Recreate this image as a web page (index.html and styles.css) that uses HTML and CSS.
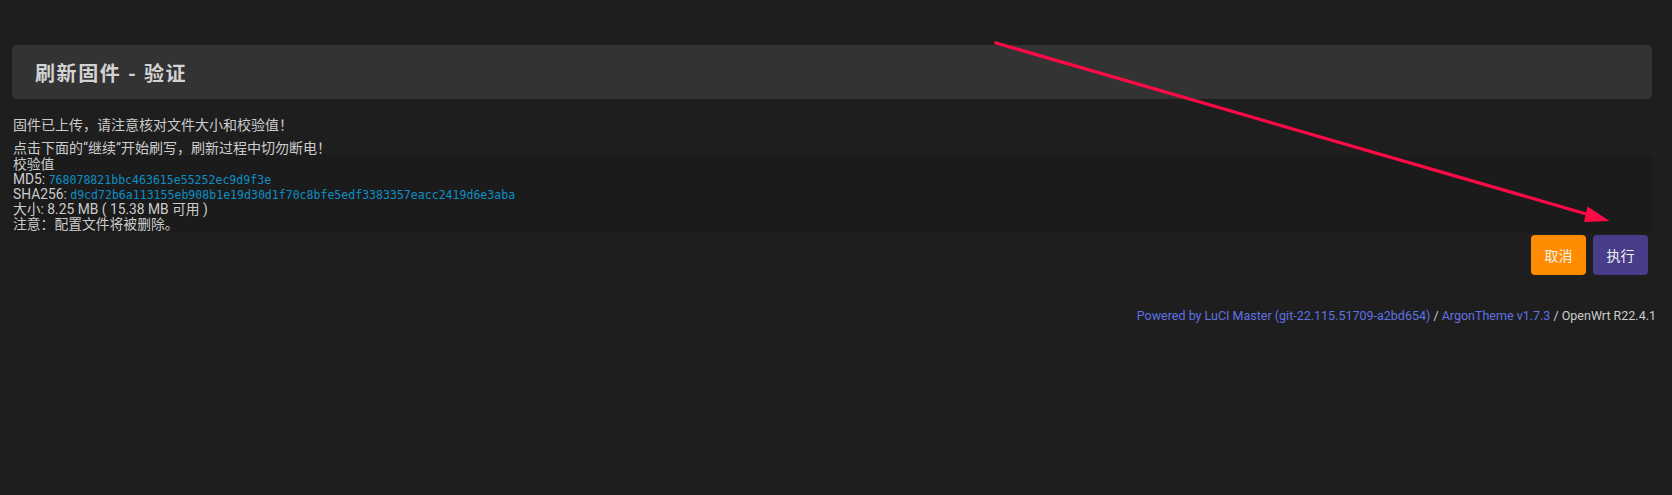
FILE: index.html
```html
<!DOCTYPE html>
<html lang="zh-CN">
<head>
<meta charset="utf-8">
<title>刷新固件 - 验证</title>
<link rel="stylesheet" href="styles.css">
</head>
<body>
<div class="main">
  <div class="page-title"><h2>刷新固件 - 验证</h2></div>
  <p class="note first">固件已上传，请注意核对文件大小和校验值！</p>
  <p class="note second">点击下面的“继续”开始刷写，刷新过程中切勿断电！</p>
  <div class="checksums">
    <div class="line">校验值</div>
    <div class="line">MD5: <code>768078821bbc463615e55252ec9d9f3e</code></div>
    <div class="line">SHA256: <code>d9cd72b6a113155eb908b1e19d30d1f70c8bfe5edf3383357eacc2419d6e3aba</code></div>
    <div class="line">大小: 8.25 MB ( 15.38 MB 可用 )</div>
    <div class="line">注意：配置文件将被删除。</div>
  </div>
  <div class="actions">
    <button class="btn btn-cancel">取消</button>
    <button class="btn btn-apply">执行</button>
  </div>
</div>
<footer class="footer">
  <a href="#">Powered by LuCI Master (git-22.115.51709-a2bd654)</a> / <a href="#">ArgonTheme v1.7.3</a> / OpenWrt R22.4.1
</footer>
<svg class="annotation" width="1672" height="495" viewBox="0 0 1672 495">
  <line x1="994.5" y1="42.5" x2="1588" y2="214.5" stroke="#ff0a46" stroke-width="3.2"/>
  <polygon points="1587.5,206.5 1584,222 1609.5,221" fill="#ff0a46"/>
</svg>
</body>
</html>
```

FILE: styles.css
```css
html, body {
  margin: 0;
  padding: 0;
  background: #1e1e1e;
}
body {
  position: relative;
  min-height: 495px;
  font-family: Roboto, "Noto Sans CJK SC", sans-serif;
  color: #cccccc;
  font-size: 14px;
}
.main {
  padding: 45px 20px 0 12px;
}
.page-title {
  background: #333333;
  border-radius: 5px;
  height: 54px;
  display: flex;
  align-items: center;
  padding-left: 23px;
}
.page-title h2 {
  margin: 0;
  font-size: 20px;
  font-weight: 700;
  letter-spacing: 1.6px;
  color: #d2d2d2;
}
.note {
  margin: 0;
  line-height: 20px;
  padding-left: 1px;
}
.note.first {
  margin-top: 16px;
}
.note.second {
  margin-top: 3px;
}
.checksums {
  margin-top: -1px;
  background: #1b1b1b;
  border-radius: 4px;
  box-shadow: 0 0 2px rgba(0, 0, 0, 0.35);
  padding: 0 1px;
  font-size: 13.8px;
}
.checksums .line {
  height: 15px;
  line-height: 15px;
  white-space: nowrap;
}
.checksums code {
  font-family: "DejaVu Sans Mono", monospace;
  font-size: 11.55px;
  line-height: 10px;
  color: #0d8fc5;
}
.actions {
  display: flex;
  justify-content: flex-end;
  gap: 7px;
  margin-top: 3px;
  padding-right: 4px;
}
.btn {
  height: 40px;
  padding: 0 13.5px;
  border: none;
  border-radius: 4px;
  font-family: Roboto, "Noto Sans CJK SC", sans-serif;
  font-size: 14px;
  color: #f2f2f2;
  cursor: pointer;
}
.btn-cancel {
  background: #ff8c00;
}
.btn-apply {
  background: #483d8b;
}
.footer {
  margin-top: 31px;
  text-align: right;
  padding-right: 16px;
  font-size: 12.5px;
  line-height: 20px;
  color: #cccccc;
}
.footer a {
  color: #5e72e4;
  text-decoration: none;
}
.annotation {
  position: absolute;
  left: 0;
  top: 0;
  pointer-events: none;
}
```
